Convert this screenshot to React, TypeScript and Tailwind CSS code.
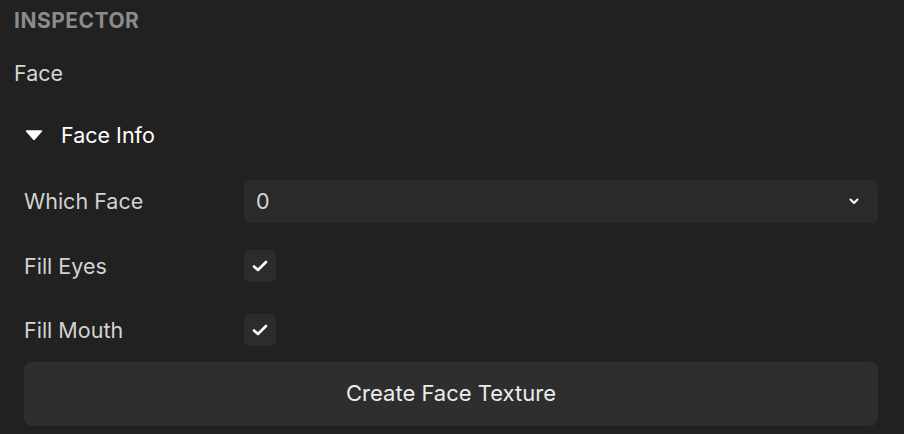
import React from 'react';

const font = { fontFamily: 'Inter, "Noto Sans", sans-serif' };

function CheckRow({ label }: { label: string }) {
  return (
    <div className="flex h-[32px] items-center">
      <div className="w-[220px] text-[21.5px] text-[#d2d2d2]">{label}</div>
      <div className="flex h-[32px] w-[32px] items-center justify-center rounded-[6px] bg-[#2c2c2c]">
        <svg width="16" height="12" viewBox="0 0 16 12" fill="none">
          <path d="M2 6.5 L6 10 L14 2" stroke="#ffffff" strokeWidth="2.6" strokeLinecap="round" strokeLinejoin="round" />
        </svg>
      </div>
    </div>
  );
}

export default function App() {
  return (
    <div className="h-[434px] w-[904px] overflow-hidden bg-[#212121]" style={font}>
      <div className="flex h-[42px] items-center pl-[14px] text-[21px] font-bold tracking-[0.5px] text-[#8b8b8b]">
        INSPECTOR
      </div>
      <div className="flex h-[62px] items-center pl-[14px] text-[21.5px] text-[#d4d4d4]">Face</div>
      <div className="flex h-[62px] items-center pl-[25px] text-[21.5px] text-white">
        <svg width="18" height="10" viewBox="0 0 18 10" className="mr-[18px]">
          <path d="M1.5 1 H16.5 L9 9.5 Z" fill="#ffffff" stroke="#ffffff" strokeWidth="1.5" strokeLinejoin="round" />
        </svg>
        Face Info
      </div>

      <div className="mt-[14px] flex flex-col pl-[24px] pr-[26px]">
        <div className="flex h-[43px] items-center">
          <div className="w-[220px] text-[21.5px] text-[#d2d2d2]">Which Face</div>
          <div className="flex h-[43px] flex-1 items-center justify-between rounded-[6px] bg-[#2a2a2a] pl-[12px] pr-[19px]">
            <span className="text-[21.5px] text-[#d6d6d6]">0</span>
            <svg width="10" height="7" viewBox="0 0 10 7" fill="none">
              <path d="M1.5 1.5 L5 5 L8.5 1.5" stroke="#ffffff" strokeWidth="2" strokeLinecap="round" strokeLinejoin="round" />
            </svg>
          </div>
        </div>

        <div className="mt-[27px]">
          <CheckRow label="Fill Eyes" />
        </div>
        <div className="mt-[32px]">
          <CheckRow label="Fill Mouth" />
        </div>

        <button className="mt-[16px] flex h-[64px] w-full items-center justify-center rounded-[8px] bg-[#2e2e2e] pb-[2px] text-[22px] text-[#ececec]">
          Create Face Texture
        </button>
      </div>
    </div>
  );
}
